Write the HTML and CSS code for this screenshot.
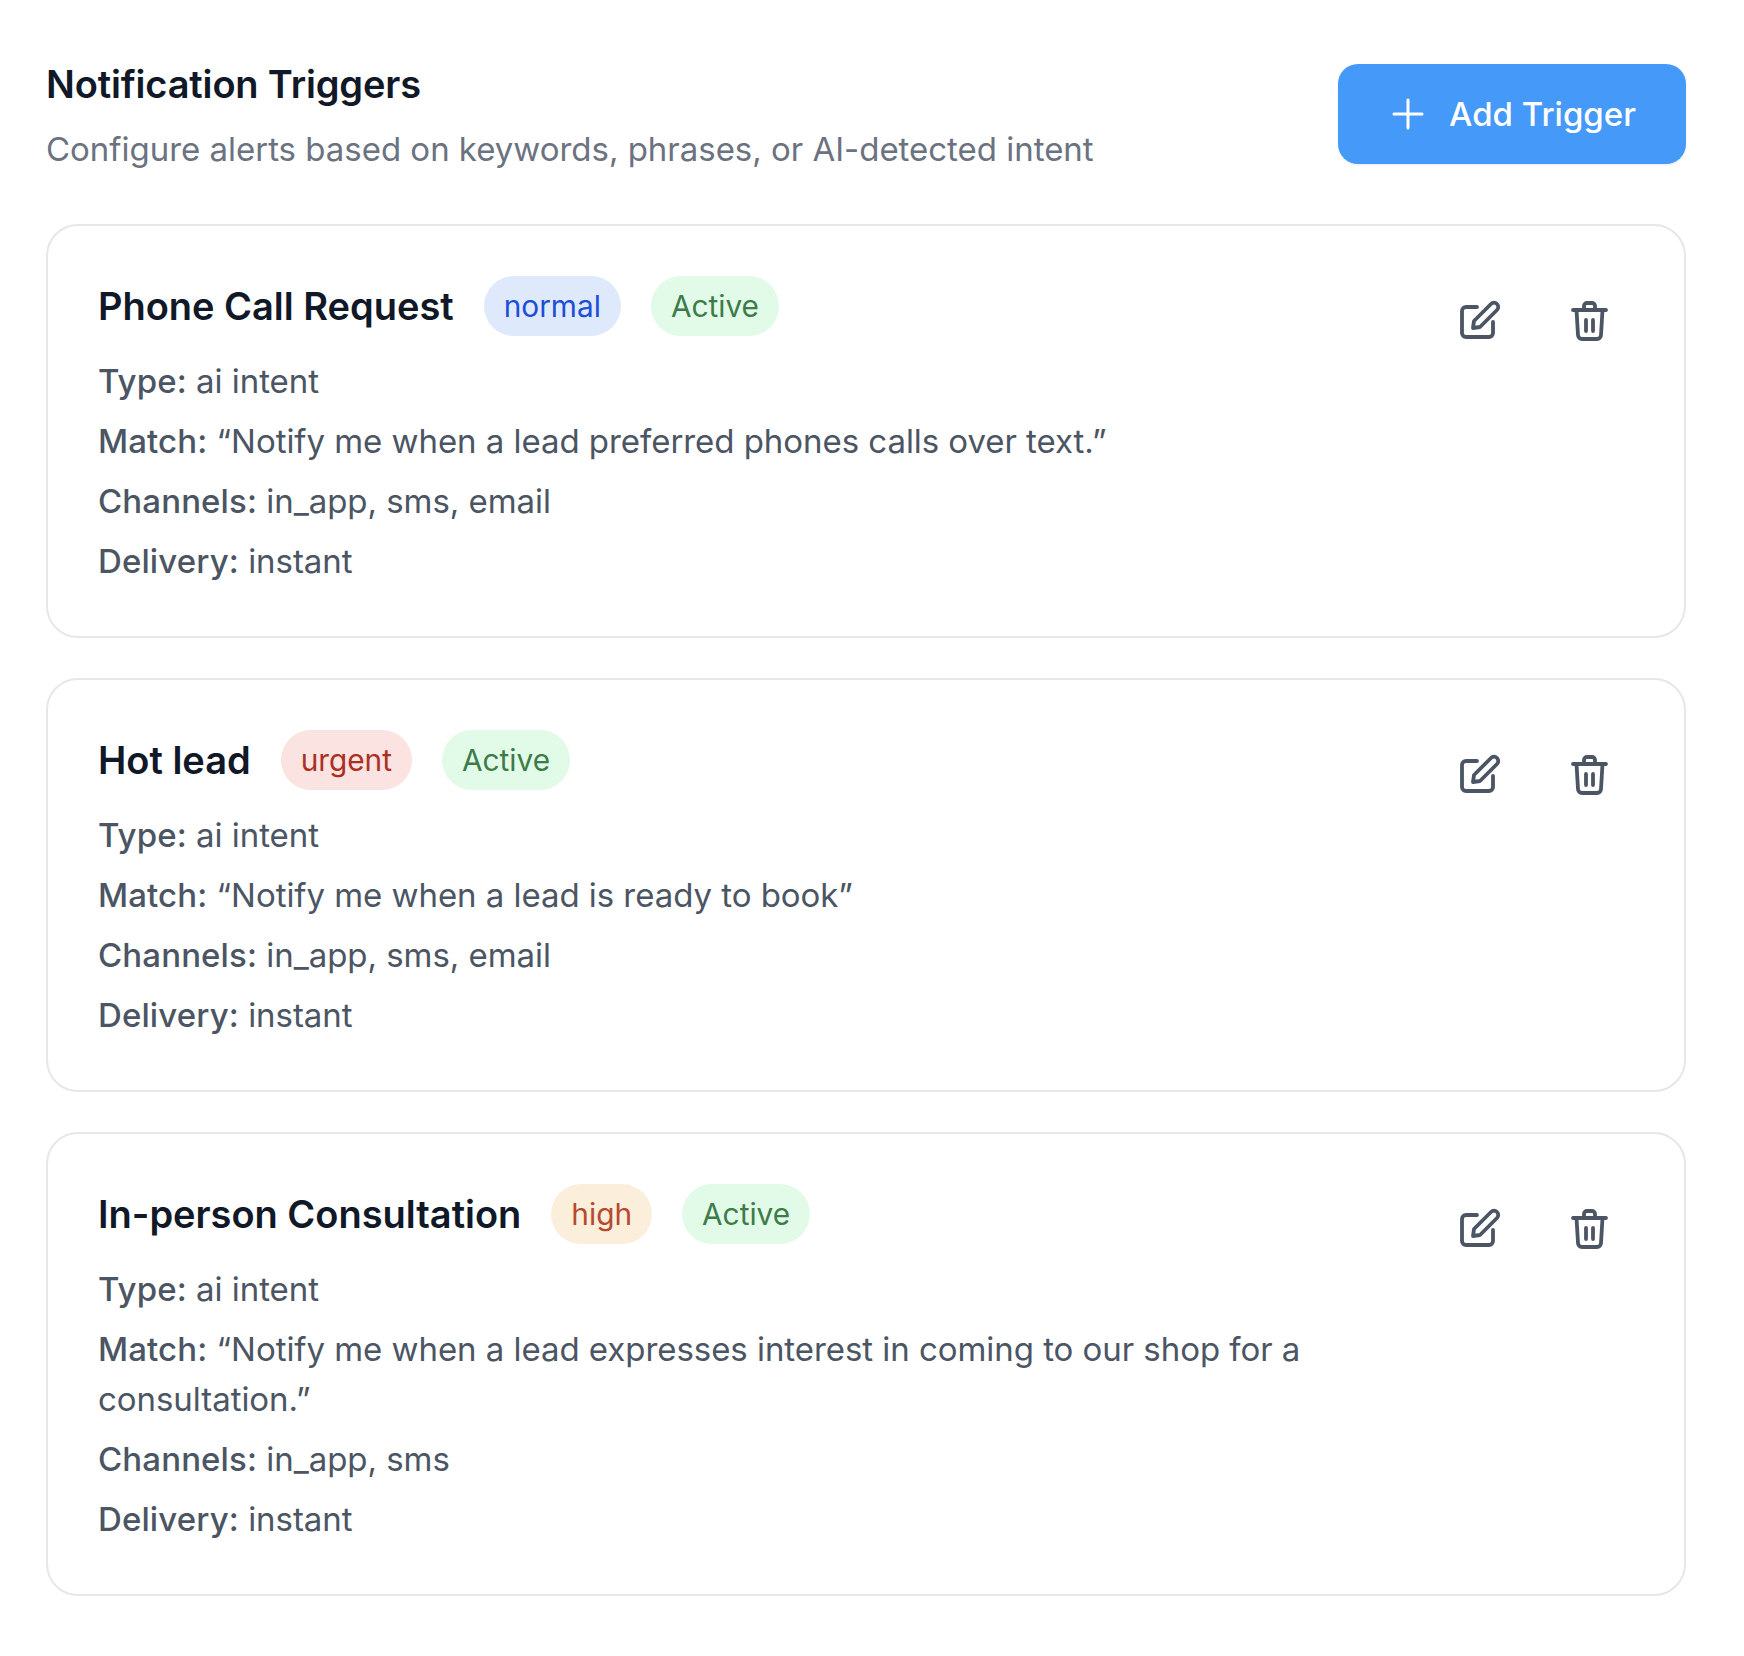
FILE: index.html
```html
<!DOCTYPE html>
<html lang="en">
<head>
  <meta charset="UTF-8" />
  <title>Notification Triggers</title>
  <link rel="stylesheet" href="styles.css">
</head>
<body>
  <svg width="0" height="0" class="defs">
    <symbol id="icon-edit" viewBox="0 0 46 46">
      <path d="M21 8H10a4 4 0 0 0-4 4v22a4 4 0 0 0 4 4h23a4 4 0 0 0 4-4V23" />
      <path d="M35 5a4.200 4.200 0 0 1 6 6L24 28l-7 1 1-7z" />
    </symbol>
    <symbol id="icon-trash" viewBox="0 0 46 46">
      <path d="M7 11h33" />
      <path d="M10.500 11l1.500 25a4 4 0 0 0 4 4h15a4 4 0 0 0 4-4l1.500-25" />
      <path d="M18 11V7a3 3 0 0 1 3-3h5a3 3 0 0 1 3 3v4" />
      <path d="M20 21v11" />
      <path d="M27 21v11" />
    </symbol>
  </svg>

  <div class="page">
    <div class="header">
      <div>
        <h2>Notification Triggers</h2>
        <p class="subtitle">Configure alerts based on keywords, phrases, or AI-detected intent</p>
      </div>
      <button class="add-btn">
        <svg class="plus" viewBox="0 0 32 32"><path d="M16 2v28M2 16h28" /></svg>
        Add Trigger
      </button>
    </div>

    <div class="card">
      <div class="card-body">
        <div class="card-title">
          <h3>Phone Call Request</h3>
          <span class="pill normal">normal</span>
          <span class="pill active">Active</span>
        </div>
        <p><strong>Type:</strong> ai intent</p>
        <p><strong>Match:</strong> “Notify me when a lead preferred phones calls over text.”</p>
        <p><strong>Channels:</strong> in_app, sms, email</p>
        <p><strong>Delivery:</strong> instant</p>
      </div>
      <div class="actions">
        <svg class="icon"><use href="#icon-edit" /></svg>
        <svg class="icon"><use href="#icon-trash" /></svg>
      </div>
    </div>

    <div class="card">
      <div class="card-body">
        <div class="card-title">
          <h3>Hot lead</h3>
          <span class="pill urgent">urgent</span>
          <span class="pill active">Active</span>
        </div>
        <p><strong>Type:</strong> ai intent</p>
        <p><strong>Match:</strong> “Notify me when a lead is ready to book”</p>
        <p><strong>Channels:</strong> in_app, sms, email</p>
        <p><strong>Delivery:</strong> instant</p>
      </div>
      <div class="actions">
        <svg class="icon"><use href="#icon-edit" /></svg>
        <svg class="icon"><use href="#icon-trash" /></svg>
      </div>
    </div>

    <div class="card">
      <div class="card-body">
        <div class="card-title">
          <h3>In-person Consultation</h3>
          <span class="pill high">high</span>
          <span class="pill active">Active</span>
        </div>
        <p><strong>Type:</strong> ai intent</p>
        <p><strong>Match:</strong> “Notify me when a lead expresses interest in coming to our shop for a consultation.”</p>
        <p><strong>Channels:</strong> in_app, sms</p>
        <p><strong>Delivery:</strong> instant</p>
      </div>
      <div class="actions">
        <svg class="icon"><use href="#icon-edit" /></svg>
        <svg class="icon"><use href="#icon-trash" /></svg>
      </div>
    </div>
  </div>
</body>
</html>
```

FILE: styles.css
```css
body {
  margin: 0;
  background: #fff;
  font-family: Inter, sans-serif;
  color: #4b5563;
}

.defs {
  display: block;
}

.page {
  padding: 63px 58px 0 46px;
}

.header {
  display: flex;
  justify-content: space-between;
  align-items: flex-start;
  margin-bottom: 52px;
}

h2 {
  margin: 0;
  font-size: 38px;
  line-height: 42px;
  font-weight: 600;
  letter-spacing: -0.16px;
  color: #111827;
}

.subtitle {
  margin: 21px 0 0;
  font-size: 33px;
  line-height: 46px;
  letter-spacing: -0.02px;
  color: #6b7280;
}

.add-btn {
  display: flex;
  align-items: center;
  gap: 25px;
  width: 348px;
  height: 100px;
  margin-top: 1px;
  padding: 0 50px 0 54px;
  background: #4499f9;
  color: #fff;
  border: none;
  border-radius: 20px;
  font-family: inherit;
  font-size: 33px;
  font-weight: 500;
  box-shadow: 0 1px 3px rgba(0, 0, 0, 0.08);
}

.plus {
  width: 32px;
  height: 32px;
  fill: none;
  stroke: #fff;
  stroke-width: 3;
  stroke-linecap: round;
}

.card {
  display: flex;
  justify-content: space-between;
  align-items: flex-start;
  margin-bottom: 40px;
  padding: 50px;
  border: 2px solid #e5e7eb;
  border-radius: 32px;
}

.card-body {
  width: 1240px;
}

.card-title {
  display: flex;
  align-items: center;
  gap: 30px;
  margin-bottom: 20px;
}

h3 {
  margin: 0;
  font-size: 38px;
  font-weight: 600;
  letter-spacing: -0.02px;
  color: #111827;
}

.pill {
  padding: 0 20px;
  height: 60px;
  line-height: 61px;
  border-radius: 30px;
  font-size: 29.8px;
  font-weight: 400;
}

.normal { background: #dfe9fc; color: #1d4ed8; }
.urgent { background: #fae3e1; color: #ab2f23; }
.high { background: #fbeedb; color: #b54a2e; }
.active { background: #e2fbe8; color: #3d7b49; }

.card p {
  margin: 10px 0 0;
  font-size: 33px;
  line-height: 50px;
  letter-spacing: -0.05px;
}

strong {
  font-weight: 500;
  letter-spacing: 0.12px;
}

.actions {
  display: flex;
  gap: 64px;
  margin: 23px 22px 0 0;
}

.icon {
  width: 46px;
  height: 46px;
  fill: none;
  stroke: #4b5563;
  stroke-width: 3.8;
  stroke-linecap: round;
  stroke-linejoin: round;
}
```
